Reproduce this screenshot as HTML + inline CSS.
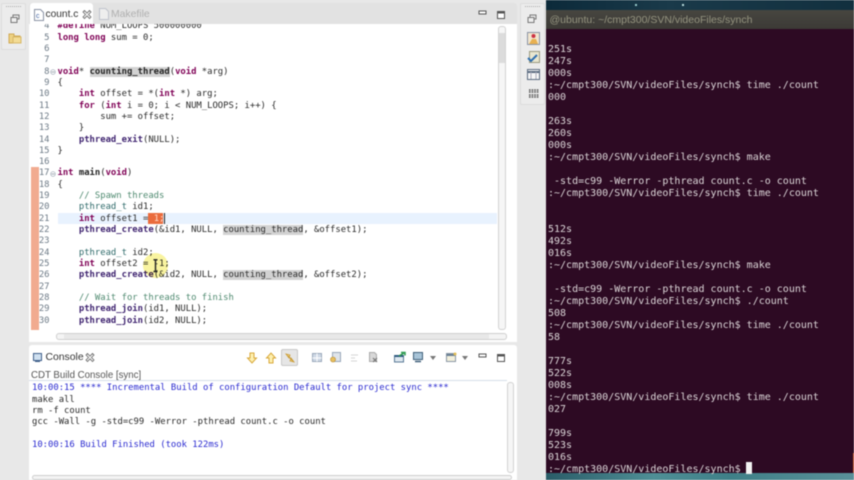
<!DOCTYPE html>
<html><head><meta charset="utf-8">
<style>
html,body{margin:0;padding:0;width:854px;height:480px;overflow:hidden;background:#e8e8e8}
#root{position:relative;width:854px;height:480px;overflow:hidden;filter:blur(.45px)}
.a{position:absolute}
.c{position:absolute;font:8.9px/11px "DejaVu Sans Mono","Liberation Mono",monospace;white-space:pre;color:#2a2a2a;margin-top:2.2px}
.n{position:absolute;width:20px;left:29.5px;text-align:right;font:8.9px/11px "DejaVu Sans Mono","Liberation Mono",monospace;color:#6d7a86;margin-top:2.2px}
.k{color:#7f0055;font-weight:bold}
.f{color:#3f2470;font-weight:bold}
.b{font-weight:bold;color:#222}
.g{color:#4f8a70}
.t{color:#2f6a6a}
.o{background:#d2d2d2}
.t1{position:absolute;left:548px;font:10px/12px "DejaVu Sans Mono","Liberation Mono",monospace;white-space:pre;color:#dcd6d8;margin-top:1.5px}
.cs{color:#2a2ad0}
svg{position:absolute;overflow:visible}
</style></head><body><div id="root">

<!-- desktop -->
<div class="a" style="left:546px;top:0;width:308px;height:10px;background:linear-gradient(90deg,#0c2a3a,#1a3a4a 40%,#12303f)"></div>
<div class="a" style="left:635px;top:4px;width:2px;height:2px;background:#9cc"></div>
<div class="a" style="left:682px;top:4px;width:2px;height:2px;background:#bdd"></div>
<div class="a" style="left:546px;top:10px;width:308px;height:19px;background:linear-gradient(#474640,#3c3a36)"></div>
<div class="a" style="left:549.5px;top:13px;font:10.5px/14px 'Liberation Sans',sans-serif;color:#94937f;white-space:pre">@ubuntu: ~/cmpt300/SVN/videoFiles/synch</div>
<div class="a" style="left:546px;top:29px;width:308px;height:444px;background:#2d0a23"></div>
<div class="a" style="left:546px;top:473px;width:308px;height:7px;background:linear-gradient(90deg,#2a5c68,#4f8f96 35%,#3f8088 60%,#5a9099)"></div>
<div class="a" style="left:853px;top:453px;width:1px;height:20px;background:#c8552a"></div>

<!-- terminal -->
<div class="t1" style="top:42px">251s</div>
<div class="t1" style="top:54px">247s</div>
<div class="t1" style="top:66px">000s</div>
<div class="t1" style="top:78px">:~/cmpt300/SVN/videoFiles/synch$ time ./count</div>
<div class="t1" style="top:90px">000</div>
<div class="t1" style="top:114px">263s</div>
<div class="t1" style="top:126px">260s</div>
<div class="t1" style="top:138px">000s</div>
<div class="t1" style="top:150px">:~/cmpt300/SVN/videoFiles/synch$ make</div>
<div class="t1" style="top:174px"> -std=c99 -Werror -pthread count.c -o count</div>
<div class="t1" style="top:186px">:~/cmpt300/SVN/videoFiles/synch$ time ./count</div>
<div class="t1" style="top:222px">512s</div>
<div class="t1" style="top:234px">492s</div>
<div class="t1" style="top:246px">016s</div>
<div class="t1" style="top:258px">:~/cmpt300/SVN/videoFiles/synch$ make</div>
<div class="t1" style="top:282px"> -std=c99 -Werror -pthread count.c -o count</div>
<div class="t1" style="top:294px">:~/cmpt300/SVN/videoFiles/synch$ ./count</div>
<div class="t1" style="top:306px">508</div>
<div class="t1" style="top:318px">:~/cmpt300/SVN/videoFiles/synch$ time ./count</div>
<div class="t1" style="top:330px">58</div>
<div class="t1" style="top:354px">777s</div>
<div class="t1" style="top:366px">522s</div>
<div class="t1" style="top:378px">008s</div>
<div class="t1" style="top:390px">:~/cmpt300/SVN/videoFiles/synch$ time ./count</div>
<div class="t1" style="top:402px">027</div>
<div class="t1" style="top:426px">799s</div>
<div class="t1" style="top:438px">523s</div>
<div class="t1" style="top:450px">016s</div>
<div class="t1" style="top:462px">:~/cmpt300/SVN/videoFiles/synch$</div>
<div class="a" style="left:746px;top:462px;width:6px;height:12px;background:#f2f2f2"></div>

<!-- IDE base -->
<div class="a" style="left:0;top:0;width:546px;height:480px;background:#e8e8e8"></div>
<div class="a" style="left:1px;top:3px;width:25px;height:47px;background:#ececec;border:1px solid #dcdcdc;border-radius:2px;box-sizing:border-box"></div>
<div class="a" style="left:520px;top:3px;width:25px;height:102px;background:#ececec;border:1px solid #dcdcdc;border-radius:2px;box-sizing:border-box"></div>
<div class="a" style="left:6px;top:6px;width:15px;border-top:1px dotted #aaa"></div>
<div class="a" style="left:525px;top:6px;width:15px;border-top:1px dotted #aaa"></div>

<!-- left icons -->
<svg style="left:10px;top:14px" width="12" height="10"><rect x="3" y="1" width="6" height="4" fill="none" stroke="#777"/><rect x="1" y="3.5" width="6" height="5" fill="#eee" stroke="#777"/></svg>
<svg style="left:8px;top:32px" width="14" height="12"><path d="M1 2h5v2h6v7H1z" fill="#edd283" stroke="#d0aa55"/><rect x="5" y="5" width="8" height="6" fill="#f3dc95" stroke="#d8b868"/></svg>

<!-- right icons -->
<svg style="left:527px;top:14px" width="12" height="10"><rect x="3" y="1" width="6" height="4" fill="none" stroke="#777"/><rect x="1" y="3.5" width="6" height="5" fill="#eee" stroke="#777"/></svg>
<svg style="left:527px;top:32px" width="14" height="14"><rect x=".5" y=".5" width="12" height="12" fill="#f1e6cf" stroke="#8a93a5"/><circle cx="6.5" cy="4" r="2" fill="#cc3344"/><path d="M2 12l3-5h4l2 5z" fill="#e8b050"/></svg>
<svg style="left:527px;top:51px" width="14" height="14"><rect x="2.5" y=".5" width="10" height="11" fill="#e8e6d0" stroke="#9a9a80"/><path d="M1 7l3 3 6-6" fill="none" stroke="#2f6fb0" stroke-width="2"/></svg>
<svg style="left:527px;top:69px" width="14" height="12"><rect x=".5" y=".5" width="12" height="10" fill="#f6f6f6" stroke="#5b6b80"/><path d="M1 3h11" stroke="#5b6b80" stroke-width="2"/><path d="M4 3v7M9 3v7" stroke="#aab"/></svg>
<svg style="left:528px;top:89px" width="12" height="10"><path d="M1 1h10M1 3h10M1 6h10M1 8h10" stroke="#555" stroke-width="1.4" stroke-dasharray="1.6 1"/></svg>

<!-- editor -->
<div class="a" style="left:29px;top:3px;width:488px;height:21px;background:#e2e2e2;border-radius:3px 3px 0 0"></div>
<div class="a" style="left:29px;top:24px;width:488px;height:318px;background:#fff"></div>
<div class="a" style="left:30px;top:3px;width:63px;height:21px;background:#fff;border-radius:3px 3px 0 0"></div>
<svg style="left:34px;top:9px" width="10" height="12"><path d="M.5.5h6l3 3v8H.5z" fill="#fff" stroke="#8a93a5"/><text x="2" y="9" font-size="7" font-family="Liberation Sans" fill="#3a5ea0">c</text></svg>
<div class="a" style="left:45.5px;top:7.5px;font:10.2px/14px 'Liberation Sans',sans-serif;color:#333">count.c</div>
<svg style="left:83px;top:10px" width="9" height="9"><path d="M1.500.5L4 3 6.500.5 8 2 5.500 4.500 8 7 6.500 8.500 4 6 1.500 8.500 0 7 2.500 4.500 0 2z" fill="#f4f4f4" stroke="#666" stroke-width=".8"/></svg>
<svg style="left:99px;top:8px" width="10" height="12"><path d="M.5.5h6l3 3v8H.5z" fill="#eee" stroke="#c0c4cc"/></svg>
<div class="a" style="left:111px;top:7.500px;font:10.4px/14px 'Liberation Sans',sans-serif;color:#b0b0b0">Makefile</div>
<svg style="left:478px;top:10px" width="30" height="10"><rect x="1" y="1" width="7" height="3" fill="#fff" stroke="#555"/><rect x="19.500" y="1.500" width="7" height="7" fill="#fff" stroke="#555"/><path d="M19.500 2.500h7" stroke="#555" stroke-width="2"/></svg>

<!-- editor overlays -->
<div class="a" style="left:31px;top:167px;width:8px;height:163px;background:#f1ab90"></div>
<div class="a" style="left:58px;top:213px;width:439px;height:11px;background:#e8f2fe"></div>
<div class="a" style="left:148px;top:213px;width:15px;height:11px;background:#ea6b3c"></div>
<div class="a" style="left:164px;top:213px;width:1px;height:11px;background:#222"></div>

<!-- line 4 clipped -->
<div class="a" style="left:30px;top:24px;width:460px;height:7px;overflow:hidden">
<div class="n" style="top:-4.800px;left:-.5px">4</div>
<div class="c" style="left:27.5px;top:-4.800px"><span class="k">#define</span> NUM_LOOPS 500000000</div>
</div>

<div class="n" style="top:30.500px">5</div><div class="c" style="left:57.5px;top:30.500px"><span class="k">long long</span> sum = 0;</div>
<div class="n" style="top:41.800px">6</div>
<div class="n" style="top:53.100px">7</div>
<div class="n" style="top:64.500px">8</div><div class="c" style="left:57.5px;top:64.500px"><span class="k">void</span>* <span class="b o">counting_thread</span>(<span class="k">void</span> *arg)</div>
<div class="n" style="top:75.800px">9</div><div class="c" style="left:57.5px;top:75.800px">{</div>
<div class="n" style="top:87.100px">10</div><div class="c" style="left:57.5px;top:87.100px">    <span class="k">int</span> offset = *(<span class="k">int</span> *) arg;</div>
<div class="n" style="top:98.400px">11</div><div class="c" style="left:57.5px;top:98.400px">    <span class="k">for</span> (<span class="k">int</span> i = 0; i &lt; NUM_LOOPS; i++) {</div>
<div class="n" style="top:109.700px">12</div><div class="c" style="left:57.5px;top:109.700px">        sum += offset;</div>
<div class="n" style="top:121.100px">13</div><div class="c" style="left:57.5px;top:121.100px">    }</div>
<div class="n" style="top:132.400px">14</div><div class="c" style="left:57.5px;top:132.400px">    <span class="f">pthread_exit</span>(NULL);</div>
<div class="n" style="top:143.700px">15</div><div class="c" style="left:57.5px;top:143.700px">}</div>
<div class="n" style="top:155px">16</div>
<div class="n" style="top:166.300px">17</div><div class="c" style="left:57.5px;top:166.300px"><span class="k">int</span> <span class="b">main</span>(<span class="k">void</span>)</div>
<div class="n" style="top:177.700px">18</div><div class="c" style="left:57.5px;top:177.700px">{</div>
<div class="n" style="top:189px">19</div><div class="c g" style="left:57.5px;top:189px">    // Spawn threads</div>
<div class="n" style="top:200.300px">20</div><div class="c" style="left:57.5px;top:200.300px">    <span class="t">pthread_t</span> id1;</div>
<div class="n" style="top:211.600px">21</div><div class="c" style="left:57.5px;top:211.600px">    <span class="k">int</span> offset1 = <span style="color:#ffd9c8">1;</span></div>
<div class="n" style="top:222.900px">22</div><div class="c" style="left:57.5px;top:222.900px">    <span class="f">pthread_create</span>(&amp;id1, NULL, <span class="o">counting_thread</span>, &amp;offset1);</div>
<div class="n" style="top:234.300px">23</div>
<div class="n" style="top:245.600px">24</div><div class="c" style="left:57.5px;top:245.600px">    <span class="t">pthread_t</span> id2;</div>
<div class="n" style="top:256.900px">25</div><div class="c" style="left:57.5px;top:256.900px">    <span class="k">int</span> offset2 = -1;</div>
<div class="n" style="top:268.200px">26</div><div class="c" style="left:57.5px;top:268.200px">    <span class="f">pthread_create</span>(&amp;id2, NULL, <span class="o">counting_thread</span>, &amp;offset2);</div>
<div class="n" style="top:279.500px">27</div>
<div class="n" style="top:290.900px">28</div><div class="c g" style="left:57.5px;top:290.900px">    // Wait for threads to finish</div>
<div class="n" style="top:302.200px">29</div><div class="c" style="left:57.5px;top:302.200px">    <span class="f">pthread_join</span>(id1, NULL);</div>
<div class="n" style="top:313.500px">30</div><div class="c" style="left:57.5px;top:313.500px">    <span class="f">pthread_join</span>(id2, NULL);</div>

<!-- fold markers -->
<svg style="left:50px;top:69px" width="7" height="7"><circle cx="3" cy="3" r="2.300" fill="#fff" stroke="#9aa6b2" stroke-width=".7"/><path d="M1.500 3h3" stroke="#7a8694" stroke-width=".7"/></svg>
<svg style="left:50px;top:171px" width="7" height="7"><circle cx="3" cy="3" r="2.300" fill="#fff" stroke="#9aa6b2" stroke-width=".7"/><path d="M1.500 3h3" stroke="#7a8694" stroke-width=".7"/></svg>

<!-- mouse highlight -->
<div class="a" style="left:143px;top:253px;width:25px;height:25px;border-radius:50%;background:#f9f4a0;mix-blend-mode:multiply"></div>
<svg style="left:151.500px;top:259px" width="7" height="14"><path d="M1.500 .8h4M1.500 12.500h4M3.500 1v11" stroke="#222" stroke-width="1.400" fill="none"/></svg>

<!-- editor scrollbars -->
<div class="a" style="left:29px;top:331px;width:488px;height:11px;background:#fff"></div>
<div class="a" style="left:56px;top:333px;width:451px;height:7px;background:#f4f4f4;border:1px solid #cfcfcf;border-radius:3px;box-sizing:border-box"></div>
<div class="a" style="left:64px;top:334px;width:425px;height:5px;background:#e8e8e8"></div>
<div class="a" style="left:498px;top:26px;width:8px;height:304px;background:#f6f6f6;border:1px solid #d2d2d2;border-radius:3px;box-sizing:border-box"></div>
<div class="a" style="left:499px;top:33px;width:6px;height:30px;background:#dcdcdc"></div>

<!-- console -->
<div class="a" style="left:29px;top:345px;width:488px;height:135px;background:#fff;border-radius:3px 3px 0 0"></div>
<svg style="left:33px;top:353px" width="10" height="10"><rect x=".5" y=".5" width="8" height="7" fill="#cfe0f0" stroke="#3f5f8a"/><path d="M2 8.500h5" stroke="#3f5f8a"/></svg>
<div class="a" style="left:45.5px;top:350.500px;font:10.400px/14px 'Liberation Sans',sans-serif;color:#333">Console</div>
<svg style="left:85.500px;top:353px" width="9" height="9"><path d="M1.500.5L4 3 6.500.5 8 2 5.500 4.500 8 7 6.500 8.500 4 6 1.500 8.500 0 7 2.500 4.500 0 2z" fill="#f4f4f4" stroke="#666" stroke-width=".8"/></svg>

<!-- console toolbar -->
<svg style="left:247px;top:352px" width="10" height="12"><path d="M3 1h4v5h2.500L5 11 .5 6H3z" fill="#fdf0b0" stroke="#d9a83a"/></svg>
<svg style="left:266px;top:352px" width="10" height="12"><path d="M3 11h4V6h2.500L5 1 .5 6H3z" fill="#fdf0b0" stroke="#d9a83a"/></svg>
<div class="a" style="left:281px;top:349px;width:17px;height:17px;background:#e6e6e6;border:1px solid #c8c8c8;border-radius:2px;box-sizing:border-box"></div>
<svg style="left:285px;top:353px" width="11" height="11"><path d="M1 1l4 1-1 3zM9 9L5 8l1-3z" fill="#f1d78a" stroke="#c99a32" stroke-width=".8"/><path d="M3 3l5 5" stroke="#c99a32"/></svg>
<svg style="left:312px;top:353px" width="11" height="10"><rect x=".5" y=".5" width="9" height="8" fill="#cfd9e6" stroke="#9aa8ba"/><path d="M.5 5h9M5 .5v8" stroke="#fff"/></svg>
<svg style="left:330px;top:352px" width="11" height="11"><rect x="2.500" y=".5" width="8" height="9" fill="#dfe4ea" stroke="#9aa8ba"/><circle cx="3" cy="7.500" r="2.500" fill="#e7c060" stroke="#b88a30" stroke-width=".6"/></svg>
<svg style="left:350px;top:354px" width="10" height="8"><path d="M1 1h7M1 4h4M1 7h6" stroke="#d4d4d4"/></svg>
<svg style="left:368px;top:352px" width="11" height="11"><path d="M1.500.5h5l2 2v7h-7z" fill="#d8d8d8" stroke="#aaa"/><path d="M5 6l4 4M9 6l-4 4" stroke="#777" stroke-width="1.200"/></svg>
<svg style="left:394px;top:352px" width="12" height="11"><rect x=".5" y="3.500" width="9" height="6.500" fill="#dfe8f0" stroke="#5a7a96"/><path d="M.5 4h9" stroke="#2d5a80" stroke-width="2"/><path d="M5 4l5-3M7 .5h4v3" stroke="#2d9a50" stroke-width="1.500" fill="none"/></svg>
<svg style="left:413px;top:352px" width="11" height="11"><rect x=".5" y=".5" width="9" height="7" fill="#a8c4d8" stroke="#3f5f7a"/><path d="M2 9.500h6" stroke="#3f5f7a" stroke-width="1.500"/></svg>
<svg style="left:430px;top:356px" width="7" height="5"><path d="M0 0h6L3 4z" fill="#777"/></svg>
<svg style="left:446px;top:352px" width="11" height="11"><rect x=".5" y="1.500" width="9" height="8" fill="#f2efdc" stroke="#8a97a5"/><path d="M.5 3h9" stroke="#6a8095" stroke-width="2"/><circle cx="9" cy="2" r="1.500" fill="#e2bd55"/></svg>
<svg style="left:462px;top:356px" width="7" height="5"><path d="M0 0h6L3 4z" fill="#777"/></svg>
<svg style="left:478px;top:353px" width="30" height="10"><rect x="1" y="1" width="7" height="3" fill="#fff" stroke="#555"/><rect x="19.500" y="1.500" width="7" height="7" fill="#fff" stroke="#555"/><path d="M19.500 2.500h7" stroke="#555" stroke-width="2"/></svg>

<div class="a" style="left:31px;top:368.500px;font:9.700px/13px 'Liberation Sans',sans-serif;color:#555;white-space:pre">CDT Build Console [sync]</div>
<div class="a" style="left:29px;top:380px;width:478px;border-top:1px solid #d6dee8"></div>

<div class="c cs" style="left:32px;top:381px">10:00:15 **** Incremental Build of configuration Default for project sync ****</div>
<div class="c" style="left:32px;top:392.500px">make all</div>
<div class="c" style="left:32px;top:404px">rm -f count</div>
<div class="c" style="left:32px;top:415.200px">gcc -Wall -g -std=c99 -Werror -pthread count.c -o count</div>
<div class="c cs" style="left:32px;top:438px">10:00:16 Build Finished (took 122ms)</div>

<div class="a" style="left:507px;top:382px;width:7px;height:91px;background:#f6f6f6;border:1px solid #d2d2d2;border-radius:3px;box-sizing:border-box"></div>
<div class="a" style="left:32px;top:475px;width:480px;height:5px;background:#f4f4f4;border:1px solid #cfcfcf;border-radius:3px;box-sizing:border-box"></div>

</div></body></html>
